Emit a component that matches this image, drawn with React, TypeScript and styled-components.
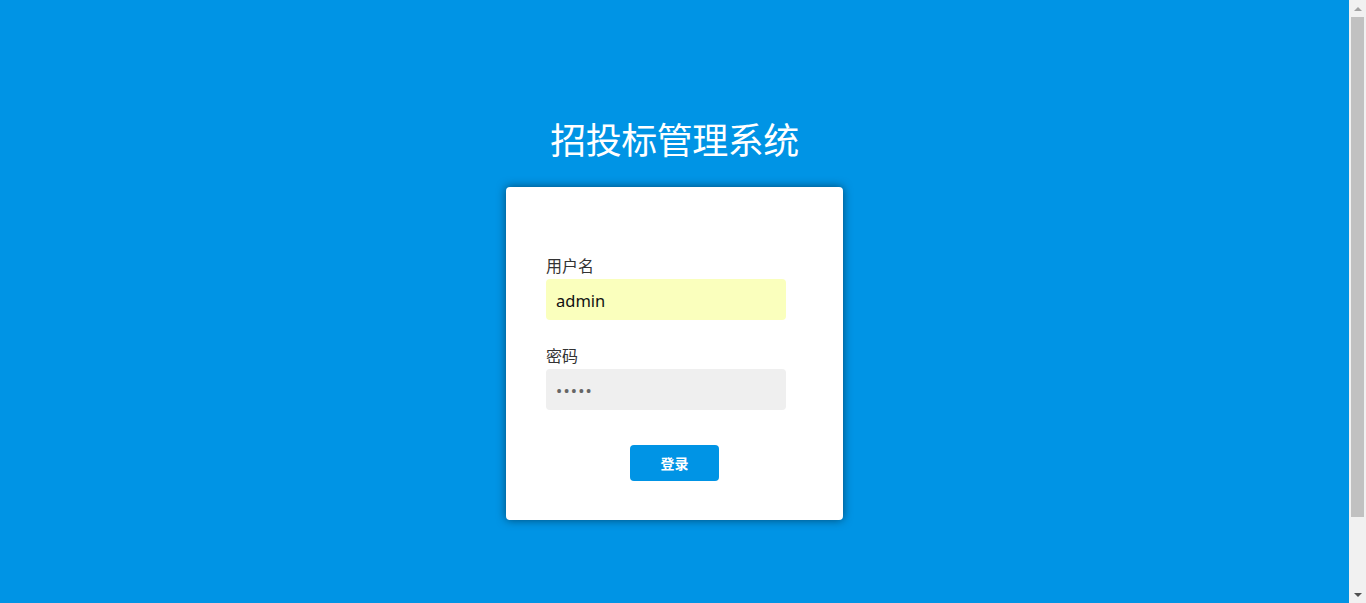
import React from "react";
import styled, { createGlobalStyle } from "styled-components";

const Global = createGlobalStyle`
  html, body {
    margin: 0;
    padding: 0;
    background: #0094e5;
    overflow: hidden;
  }
  body {
    font-family: "Noto Sans CJK SC", "Noto Sans", sans-serif;
  }
`;

const Shell = styled.div`
  display: flex;
  height: 100vh;
  overflow: hidden;
`;

const Main = styled.main`
  flex: 1;
  min-width: 0;
  min-height: 686px;
  display: flex;
  flex-direction: column;
  align-items: center;
  padding-top: 113px;
  box-sizing: border-box;
  background: #0094e5;
`;

const ScrollRail = styled.div`
  width: 17px;
  flex: none;
  display: flex;
  flex-direction: column;
  background: #f1f1f1;
`;

const RailButton = styled.div`
  height: 17px;
  flex: none;
  display: flex;
  align-items: center;
  justify-content: center;
`;

const Arrow = styled.span<{ $dir: "up" | "down" }>`
  width: 0;
  height: 0;
  margin-left: 1px;
  border-left: 4px solid transparent;
  border-right: 4px solid transparent;
  ${(p) =>
    p.$dir === "up"
      ? "border-bottom: 4px solid #a3a3a3; margin-top: 1px;"
      : "border-top: 4px solid #505050; margin-top: 1px;"}
`;

const Track = styled.div`
  flex: 1;
  padding: 0 2px;
`;

const Thumb = styled.div`
  height: 500px;
  background: #c1c1c1;
`;

const Title = styled.h1`
  margin: 0;
  font-size: 36px;
  font-weight: 400;
  line-height: 50px;
  color: #ffffff;
  letter-spacing: -0.5px;
`;

const Card = styled.form`
  margin-top: 24px;
  width: 337px;
  box-sizing: border-box;
  padding: 67px 40px 39px;
  background: #ffffff;
  border-radius: 4px;
  box-shadow: 0 0 10px rgba(0, 0, 0, 0.5);
  display: flex;
  flex-direction: column;
`;

const Field = styled.div<{ $gap?: number }>`
  display: flex;
  flex-direction: column;
  margin-top: ${(p) => p.$gap ?? 0}px;
`;

const Label = styled.label`
  font-size: 16px;
  line-height: 22px;
  color: #333333;
  margin-bottom: 3px;
`;

const Input = styled.input<{ $bg: string; $color: string; $spacing?: number }>`
  width: 240px;
  height: 41px;
  box-sizing: border-box;
  border: none;
  outline: none;
  border-radius: 4px;
  padding: 1px 10px 0;
  background: ${(p) => p.$bg};
  font-family: "Noto Sans", "Noto Sans CJK SC", sans-serif;
  font-size: 16.5px;
  letter-spacing: ${(p) => p.$spacing ?? 0}px;
  color: ${(p) => p.$color};
`;

const Button = styled.button`
  align-self: center;
  margin-top: 35px;
  width: 89px;
  height: 36px;
  border: none;
  border-radius: 4px;
  background: #0094e5;
  color: #ffffff;
  font-family: "Noto Sans CJK SC", sans-serif;
  font-size: 14px;
  font-weight: 700;
  cursor: pointer;
`;

export default function App() {
  return (
    <>
      <Global />
      <Shell>
        <Main>
          <Title>招投标管理系统</Title>
          <Card onSubmit={(e) => e.preventDefault()}>
            <Field>
              <Label>用户名</Label>
              <Input $bg="#faffbd" $color="#111111" type="text" defaultValue="admin" />
            </Field>
            <Field $gap={24}>
              <Label>密码</Label>
              <Input
                $bg="#efefef"
                $color="#666666"
                $spacing={1.2}
                type="password"
                defaultValue="admin"
              />
            </Field>
            <Button type="submit">登录</Button>
          </Card>
        </Main>
        <ScrollRail aria-hidden="true">
          <RailButton>
            <Arrow $dir="up" />
          </RailButton>
          <Track>
            <Thumb />
          </Track>
          <RailButton>
            <Arrow $dir="down" />
          </RailButton>
        </ScrollRail>
      </Shell>
    </>
  );
}
